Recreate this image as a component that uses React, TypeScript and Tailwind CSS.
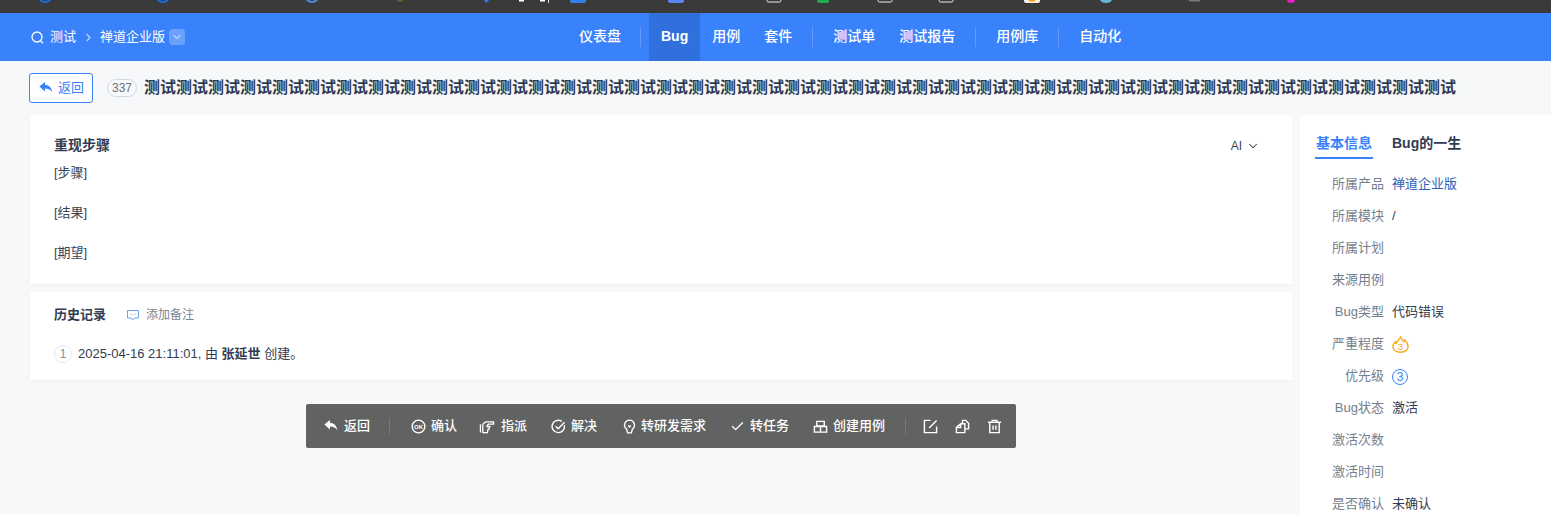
import type { ReactNode } from "react";
import { ChevronDown, ChevronRight, Check } from "lucide-react";

// bottoms of the browser's bookmark icons, cut off by the top of the screenshot
const Strip = () => (
  <svg width="1551" height="13" viewBox="0 0 1551 13" className="block bg-[#3a3a3a]">
    <g fill="none" strokeWidth="2">
      <circle cx="45" cy="-4.500" r="6.500" stroke="#1a6fe0" />
      <circle cx="163" cy="-4.500" r="6.500" stroke="#1a6fe0" />
      <circle cx="312" cy="-4.500" r="6.500" stroke="#4a90d9" />
    </g>
    <rect x="397" y="0" width="6" height="1.500" fill="#556b2f" />
    <path d="M484 0h5l-2.500 3z" fill="#2f80ed" />
    <rect x="519" y="0" width="5" height="1.500" fill="#fff" />
    <rect x="540" y="0" width="5" height="1.500" fill="#fff" />
    <rect x="548" y="0" width="1" height="3" fill="#ddd" />
    <path d="M570 0h16v1a2 2 0 0 1-2 2h-12a2 2 0 0 1-2-2z" fill="#2f80ed" />
    <path d="M668 0h16v1a2 2 0 0 1-2 2h-12a2 2 0 0 1-2-2z" fill="#5b84f5" />
    <path d="M767 0v.500a1.500 1.500 0 0 0 1.500 1.500h11a1.500 1.500 0 0 0 1.500-1.500V0" fill="none" stroke="#eee" />
    <path d="M817 0h12v1a2 2 0 0 1-2 2h-8a2 2 0 0 1-2-2z" fill="#22a84f" />
    <path d="M878 0v.500a1.500 1.500 0 0 0 1.500 1.500h11a1.500 1.500 0 0 0 1.500-1.500V0" fill="none" stroke="#eee" />
    <path d="M939 0v.500a1.500 1.500 0 0 0 1.500 1.500h11a1.500 1.500 0 0 0 1.500-1.500V0" fill="none" stroke="#eee" />
    <path d="M1024 0h16v1a2 2 0 0 1-2 2h-12a2 2 0 0 1-2-2z" fill="#f4f1e6" />
    <rect x="1029" y="0" width="6" height="1.500" fill="#f59e0b" />
    <path d="M1100 0h12q-1.500 3-6 3t-6-3z" fill="#63b6d6" />
    <rect x="1189" y="0" width="11" height="1.500" fill="#777" />
    <path d="M1287 0h8q-.500 3-4 3t-4-3z" fill="#e91fc4" />
  </svg>
);

const NavItem = ({ label, active }: { label: string; active?: boolean }) => (
  <div className={`h-12 flex items-center px-3 pb-[2px] text-white text-[14px] ${active ? "bg-[#3070dc] font-bold" : "font-medium"}`}>{label}</div>
);

const NavSep = ({ className = "ml-2" }: { className?: string }) => <div className={`w-px h-5 mr-2 bg-white/20 ${className}`} />;

const Nav = () => (
  <div className="h-12 bg-[#3a82fb] flex items-center pl-[30px]">
    <div className="w-[537px] shrink-0 h-12 flex items-center text-white text-[13px]">
      <svg width="15" height="15" viewBox="0 0 15 15" fill="none" stroke="white" strokeWidth="1.3" className="mr-[5px]">
        <circle cx="7" cy="7" r="5" />
        <path d="M10.500 10.800 13 13.200" />
      </svg>
      <span>测试</span>
      <ChevronRight size={13} strokeWidth={2} className="mr-[5px] ml-[6px] text-white/70" />
      <span>禅道企业版</span>
      <span className="ml-1 w-4 h-4 rounded-sm bg-white/25 flex items-center justify-center">
        <ChevronDown size={12} strokeWidth={2} />
      </span>
    </div>
    <div className="flex items-center h-12">
      <NavItem label="仪表盘" />
      <NavSep className="ml-[7px]" />
      <NavItem label="Bug" active />
      <NavItem label="用例" />
      <NavItem label="套件" />
      <NavSep />
      <NavItem label="测试单" />
      <NavItem label="测试报告" />
      <NavSep />
      <NavItem label="用例库" />
      <NavSep />
      <NavItem label="自动化" />
    </div>
  </div>
);

const ReplyIcon = ({ color }: { color: string }) => (
  <svg width="14" height="12" viewBox="0 0 14 12" fill={color}>
    <path d="M6 0 .4 4.600 6 9.400V6.400c3 0 5.200.8 7.200 3.600C12.800 6 10 3 6 2.800V0Z" />
  </svg>
);

const TitleRow = () => (
  <div className="h-[54px] flex items-center pl-[29px]">
    <button className="h-[30px] w-[64px] bg-white border border-[#3a82fb] rounded-[3px] flex items-center justify-center gap-[5px] pl-px text-[#3a82fb] text-[13px]">
      <ReplyIcon color="#3a82fb" />
      <span>返回</span>
    </button>
    <span className="ml-[14px] w-[30px] h-[18px] rounded-full border border-[#d5d9e4] flex items-center justify-center text-[12px] text-[#6b7280]">337</span>
    <h1 className="ml-[7px] text-[16px] font-bold text-[#313c52] whitespace-nowrap">{"测试".repeat(41)}</h1>
  </div>
);

const Steps = () => (
  <section className="relative h-[169px] bg-white shadow-[0_1px_3px_rgba(0,0,0,0.03)] px-6 pt-5">
    <h2 className="text-[14px] font-bold leading-5 text-[#313c52]">重现步骤</h2>
    <div className="text-[13px] text-[#3c4353] mt-2">
      <p className="leading-5 h-10">[步骤]</p>
      <p className="leading-5 h-10">[结果]</p>
      <p className="leading-5 h-10">[期望]</p>
    </div>
    <div className="absolute right-8 top-[22px] flex items-center gap-1 text-[12px] text-[#3c4353]">
      <span>AI</span>
      <ChevronDown size={14} strokeWidth={1.8} />
    </div>
  </section>
);

const History = () => (
  <section className="h-[88px] mt-2 bg-white shadow-[0_1px_3px_rgba(0,0,0,0.03)] px-6 pt-[13px]">
    <div className="flex items-center h-5">
      <h2 className="text-[13px] font-bold text-[#313c52]">历史记录</h2>
      <span className="ml-[21px] flex items-center gap-[7px] text-[12px] text-[#7c8494]">
        <svg width="12" height="12" viewBox="0 0 12 12" fill="none" stroke="#6ea3f8" strokeWidth="1">
          <path d="M.5 1.500h11v7.500H7L5.500 11 4 9H.5z" />
          <path d="M3.500 5.200h.8M5.600 5.200h.8M7.700 5.200h.8" stroke="#8a8f9c" />
        </svg>
        添加备注
      </span>
    </div>
    <div className="flex items-center mt-[19px] text-[13px] text-[#313c52]">
      <span className="w-[18px] h-[18px] rounded-full border border-[#e6e8ee] flex items-center justify-center text-[12px] text-[#8a909c] mr-[6px]">1</span>
      <span>2025-04-16 21:11:01, 由 <strong className="font-bold">张延世</strong> 创建。</span>
    </div>
  </section>
);

const ActionBtn = ({ icon, label, className }: { icon: ReactNode; label: string; className: string }) => (
  <span className={`flex items-center ${className}`}>
    {icon}
    <span>{label}</span>
  </span>
);

const ico = { width: 15, height: 15, viewBox: "0 0 16 16", fill: "none", stroke: "white", strokeWidth: 1.5 };

const Toolbar = () => (
  <div className="absolute left-[306px] top-[343px] w-[710px] h-11 rounded-[2px] bg-[#616362] flex items-center pl-[18px] text-white text-[13px] font-medium whitespace-nowrap">
    <ActionBtn className="gap-[6px]" icon={<ReplyIcon color="white" />} label="返回" />
    <span className="w-px h-4 bg-white/15 ml-[19px]" />
    <ActionBtn
      className="ml-[21px] gap-[5px]"
      label="确认"
      icon={
        <svg {...ico}>
          <circle cx="8" cy="8" r="6.800" />
          <text x="8" y="10.300" textAnchor="middle" fontSize="6.500" fontWeight="700" fill="white" stroke="none" fontFamily="Liberation Sans">OK</text>
        </svg>
      }
    />
    <ActionBtn
      className="ml-[22px] gap-[6px]"
      label="指派"
      icon={
        <svg {...ico} width={16} strokeWidth={1.4}>
          <path d="M1 5.500v9M3.500 5.500 6.500 3H15v2.500H9M9 5.500 8 8h3l-1 3H9l-.5 3.500h-5V5.500" />
        </svg>
      }
    />
    <ActionBtn
      className="ml-6 gap-[5px]"
      label="解决"
      icon={
        <svg {...ico}>
          <path d="M14.200 6.500A6.600 6.600 0 1 1 11.500 2.500" />
          <path d="m5 7.800 2.600 2.600L14.500 3.500" />
        </svg>
      }
    />
    <ActionBtn
      className="ml-[25px] gap-1"
      label="转研发需求"
      icon={
        <svg {...ico}>
          <path d="M8 1.200a5.300 5.300 0 0 1 3.200 9.500L10 14.800H6L4.800 10.700A5.300 5.300 0 0 1 8 1.200z" />
          <path d="M6.500 7 8 8.500 9.500 7" />
        </svg>
      }
    />
    <ActionBtn className="ml-6 gap-[5px]" label="转任务" icon={<Check size={15} strokeWidth={2.2} />} />
    <ActionBtn
      className="ml-6 gap-[5px]"
      label="创建用例"
      icon={
        <svg {...ico}>
          <path d="M4 2.500h8v5H4zM1.500 8v6H8V8zM8 8v6h6.500V8z" />
        </svg>
      }
    />
    <span className="w-px h-4 bg-white/15 ml-5" />
    <svg {...ico} className="ml-[17px]">
      <path d="M14.500 8v6.500h-13v-13H8M6.500 9.500l8-8" />
    </svg>
    <svg {...ico} className="ml-[17px]">
      <path d="M8 4.500V1.500h3.500l3 3v6H10.500M6 5 1.500 9v5.500h9V5H6zM6 5v4H1.500" />
    </svg>
    <svg {...ico} className="ml-[17px]">
      <path d="M1 3.500h14M5.500 3.500V1.500h5v2M3 3.500v11h10v-11M6.500 7v4.500M9.500 7v4.500" />
    </svg>
  </div>
);

const info: { k: string; v?: ReactNode }[] = [
  { k: "所属产品", v: <span className="text-[#2f5fb8]">禅道企业版</span> },
  { k: "所属模块", v: "/" },
  { k: "所属计划" },
  { k: "来源用例" },
  { k: "Bug类型", v: "代码错误" },
  {
    k: "严重程度",
    v: (
      <svg width="17" height="17" viewBox="0 0 17 17" fill="none" stroke="#fbaa1e" strokeWidth="1.400" className="mt-[1px]">
        <path d="M8.500 1c.2 2 2.800 2.500 3 4.800.8-.3 1.100-1 1.100-1.500 1.900 1.500 3.500 3.700 3.500 6.200 0 3.500-3.200 5.700-7.600 5.700S.9 14 .9 10.500c0-2 1.200-3.600 2.500-4.700 0 1 .5 1.500 1 1.700C4.800 5 7.300 3.500 8.500 1Z" />
        <text x="8.500" y="14" textAnchor="middle" fontSize="9.500" fill="#fbaa1e" stroke="none" fontFamily="Liberation Sans">3</text>
      </svg>
    ),
  },
  {
    k: "优先级",
    v: <span className="w-4 h-4 mt-[2px] rounded-full border border-[#3a82fb] flex items-center justify-center text-[12px] text-[#3a82fb]">3</span>,
  },
  { k: "Bug状态", v: "激活" },
  { k: "激活次数" },
  { k: "激活时间" },
  { k: "是否确认", v: "未确认" },
];

const Sidebar = () => (
  <aside className="w-[251px] h-[453px] overflow-hidden bg-white shrink-0 pl-[15px] pt-[19px]">
    <div className="flex items-start h-[25px] text-[14px] font-bold">
      <span className="w-[58px] h-[25px] border-b-2 border-[#3a82fb] text-[#3a82fb] leading-[19px] text-center">基本信息</span>
      <span className="ml-[19px] text-[#313c52] leading-[19px]">Bug的一生</span>
    </div>
    <div className="mt-[9px] text-[13px]">
      {info.map((r) => (
        <div key={r.k} className="flex h-8 items-center">
          <span className="w-[69px] text-right text-[#757e8d] shrink-0">{r.k}</span>
          <span className="ml-2 text-[#313c52] flex">{r.v}</span>
        </div>
      ))}
    </div>
  </aside>
);

export default function App() {
  return (
    <div className="font-['Liberation_Sans','Noto_Sans_CJK_SC',sans-serif] w-[1551px] h-[514px] overflow-hidden bg-[#f7f8fa]">
      <Strip />
      <Nav />
      <div className="relative">
        <TitleRow />
        <div className="flex pl-[30px] gap-2">
          <main className="w-[1262px] flex flex-col">
            <Steps />
            <History />
          </main>
          <Sidebar />
        </div>
        <Toolbar />
      </div>
    </div>
  );
}
